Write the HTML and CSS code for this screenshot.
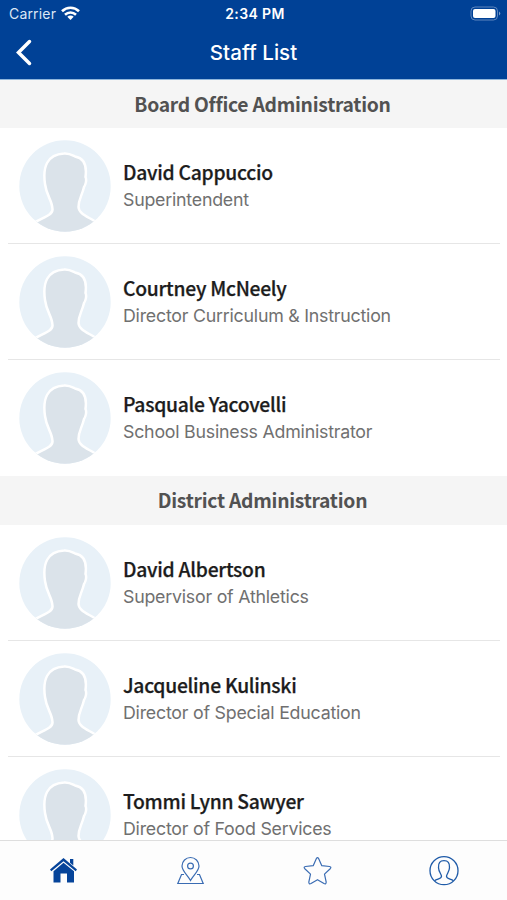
FILE: index.html
```html
<!DOCTYPE html>
<html lang="en">
<head>
<meta charset="utf-8">
<title>Staff List</title>
<link rel="stylesheet" href="styles.css">
</head>
<body>
<svg class="defs" width="0" height="0" aria-hidden="true">
  <defs>
    <clipPath id="round"><circle cx="46" cy="46" r="45.7"/></clipPath>
    <symbol id="avatar" viewBox="0 0 92 92">
      <g clip-path="url(#round)">
        <rect width="92" height="92" fill="#e8f1f8"/>
        <path d="M14 83.500C21 78 34 76 33.500 69C33 60 27.500 56 26 44C23.500 27 28 14.500 45 13.500C50 13 53 15 56 16.500C65 18 68 26 66.500 37C68 40 66.500 45 65 47C63 56 59.500 59 59.500 67C60 75 71 77 79 83.500V98H14Z" fill="#dbe3ea" stroke="#fff" stroke-width="2.500"/>
      </g>
    </symbol>
  </defs>
</svg>
<div class="app">
  <header class="top">
    <div class="status">
      <div class="carrier"><span>Carrier</span>
        <svg width="19" height="15" viewBox="0 0 19 15" fill="none" stroke="#fff" stroke-width="2.600"><path d="M1 5.200C5.800.500 13.200.500 18 5.200M4 8.700C7.200 5.700 11.800 5.700 15 8.700"/><path d="M6.300 10.700C8.100 9.100 10.900 9.100 12.700 10.700L9.500 13.900Z" fill="#fff" stroke="none"/></svg>
      </div>
      <div class="time">2:34 PM</div>
      <svg class="battery" width="31" height="15" viewBox="0 0 31 15"><rect x="1" y="1" width="26.500" height="13" rx="4" fill="none" stroke="#5f86bd" stroke-width="1"/><rect x="3" y="3" width="22.500" height="9" rx="2" fill="#fff"/><path d="M29 5.500Q31.500 7.500 29 9.500Z" fill="#7f9fca"/></svg>
    </div>
    <div class="nav">
      <svg class="back" width="18" height="28" viewBox="0 0 18 28"><path d="M15.500 2.500L4.500 13.500L15.500 24.500" fill="none" stroke="#fff" stroke-width="3.500" stroke-linecap="round"/></svg>
      <h1>Staff List</h1>
    </div>
  </header>
  <main class="list">
    <h2>Board Office Administration</h2>
    <ul>
      <li><svg class="avatar"><use href="#avatar"/></svg><div><h3>David Cappuccio</h3><p>Superintendent</p></div></li>
      <li><svg class="avatar"><use href="#avatar"/></svg><div><h3>Courtney McNeely</h3><p>Director Curriculum &amp; Instruction</p></div></li>
      <li><svg class="avatar"><use href="#avatar"/></svg><div><h3>Pasquale Yacovelli</h3><p>School Business Administrator</p></div></li>
    </ul>
    <h2 class="second">District Administration</h2>
    <ul>
      <li><svg class="avatar"><use href="#avatar"/></svg><div><h3>David Albertson</h3><p>Supervisor of Athletics</p></div></li>
      <li><svg class="avatar"><use href="#avatar"/></svg><div><h3>Jacqueline Kulinski</h3><p>Director of Special Education</p></div></li>
      <li><svg class="avatar"><use href="#avatar"/></svg><div><h3>Tommi Lynn Sawyer</h3><p>Director of Food Services</p></div></li>
    </ul>
  </main>
  <nav class="tabs">
    <svg viewBox="0 0 30 30"><path d="M15.500 2L29 13.500L27.700 15.200L15.500 5.200L3.300 15.200L2 13.500ZM22 3H25.300V9.500L22 6.700ZM15.500 6.700L26 15.300V26.500H19V17.500H12.500V26.500H5.500V15.300Z" fill="#06449a"/></svg>
    <svg viewBox="0 0 30 30" fill="none" stroke="#3a6cb3" stroke-width="1.200"><path d="M15.500 24.500C12.500 19 7 15 7 10A8.500 8.500 0 0 1 24 10C24 15 18.500 19 15.500 24.500Z"/><circle cx="15.500" cy="10" r="2.900"/><path d="M9 18.500H6.500L2.800 27.500H28.200L24.500 18.500H22"/></svg>
    <svg viewBox="0 0 30 30" fill="none" stroke="#3a6cb3" stroke-width="1.200" stroke-linejoin="round"><path transform="translate(.5 -.5)" d="M13.900 3Q15 1.200 16.100 3L19.300 10.200L27 11Q29.300 11.500 27.700 13.200L22 18.600L23.700 26.600Q23.700 29 21.500 28L15 24.200L8.500 28Q6.300 29 6.300 26.600L8 18.600L2.300 13.200Q.700 11.500 3 11L10.700 10.200Z"/></svg>
    <svg viewBox="0 0 30 30" fill="none" stroke="#1f5ba8" stroke-width="1.300"><circle cx="15" cy="14.700" r="14"/><path d="M5.500 24.700C8.500 22.700 12.500 23 12.500 20.200C12 17.700 9.700 15.700 9.500 11.700C9.200 6.700 11 4.700 15 4.700S20.800 6.700 20.500 11.700C20.300 15.700 18 17.700 17.500 20.200C17.500 23 21.500 22.700 24.500 24.700"/></svg>
  </nav>
</div>
</body>
</html>
```
FILE: styles.css
```css
* { box-sizing: border-box; margin: 0; padding: 0; }
body { width: 507px; height: 900px; overflow: hidden; background: #fff; font-family: Inter, "Liberation Sans", sans-serif; }
.defs { display: block; height: 0; }
.app { height: 900px; display: flex; flex-direction: column; }
.top { height: 80px; flex: none; background: #004196; color: #fff; border-bottom: 1px solid #8fb6dc; }
.status { height: 27px; display: grid; grid-template-columns: 1fr auto 1fr; align-items: center; padding: 0 6px 0 9px; }
.carrier { display: flex; align-items: center; gap: 5px; font-size: 14px; color: #dce7f5; letter-spacing: .18px; }
.time { font-size: 14px; font-weight: 600; letter-spacing: .4px; }
.battery { justify-self: end; }
.nav { height: 52px; display: grid; grid-template-columns: 40px 1fr 40px; align-items: center; }
.back { margin-left: 14px; }
h1 { font-size: 20.500px; font-weight: 500; letter-spacing: .05px; text-align: center; line-height: 50px; }
.list { flex: 1; min-height: 0; overflow: hidden; }
h2 { height: 48px; background: #f5f5f5; color: #525252; text-align: center; padding-left: 18px; font: 700 19.300px/48px "Noto Sans CJK SC", sans-serif; letter-spacing: -.26px; }
.second { height: 49px; line-height: 49px; }
ul { list-style: none; }
li { height: 116px; margin: 0 7px 0 8px; padding-left: 11px; display: flex; align-items: center; gap: 12px; border-bottom: 1px solid #e6e6e6; }
li:last-child { border-bottom-color: transparent; }
.avatar { width: 92px; height: 92px; }
h3 { font: 500 19.300px/28px "Noto Sans CJK SC", sans-serif; letter-spacing: -.26px; color: #1c1c1c; -webkit-text-stroke: .25px #1c1c1c; white-space: nowrap; }
p { font-size: 17.800px; line-height: 28px; letter-spacing: -.23px; color: #707070; white-space: nowrap; }
.tabs { height: 60px; flex: none; border-top: 1px solid #dedede; background: #fdfdfd; display: grid; grid-template-columns: repeat(4, 1fr); place-items: center; }
.tabs svg { width: 30px; height: 30px; }
```
